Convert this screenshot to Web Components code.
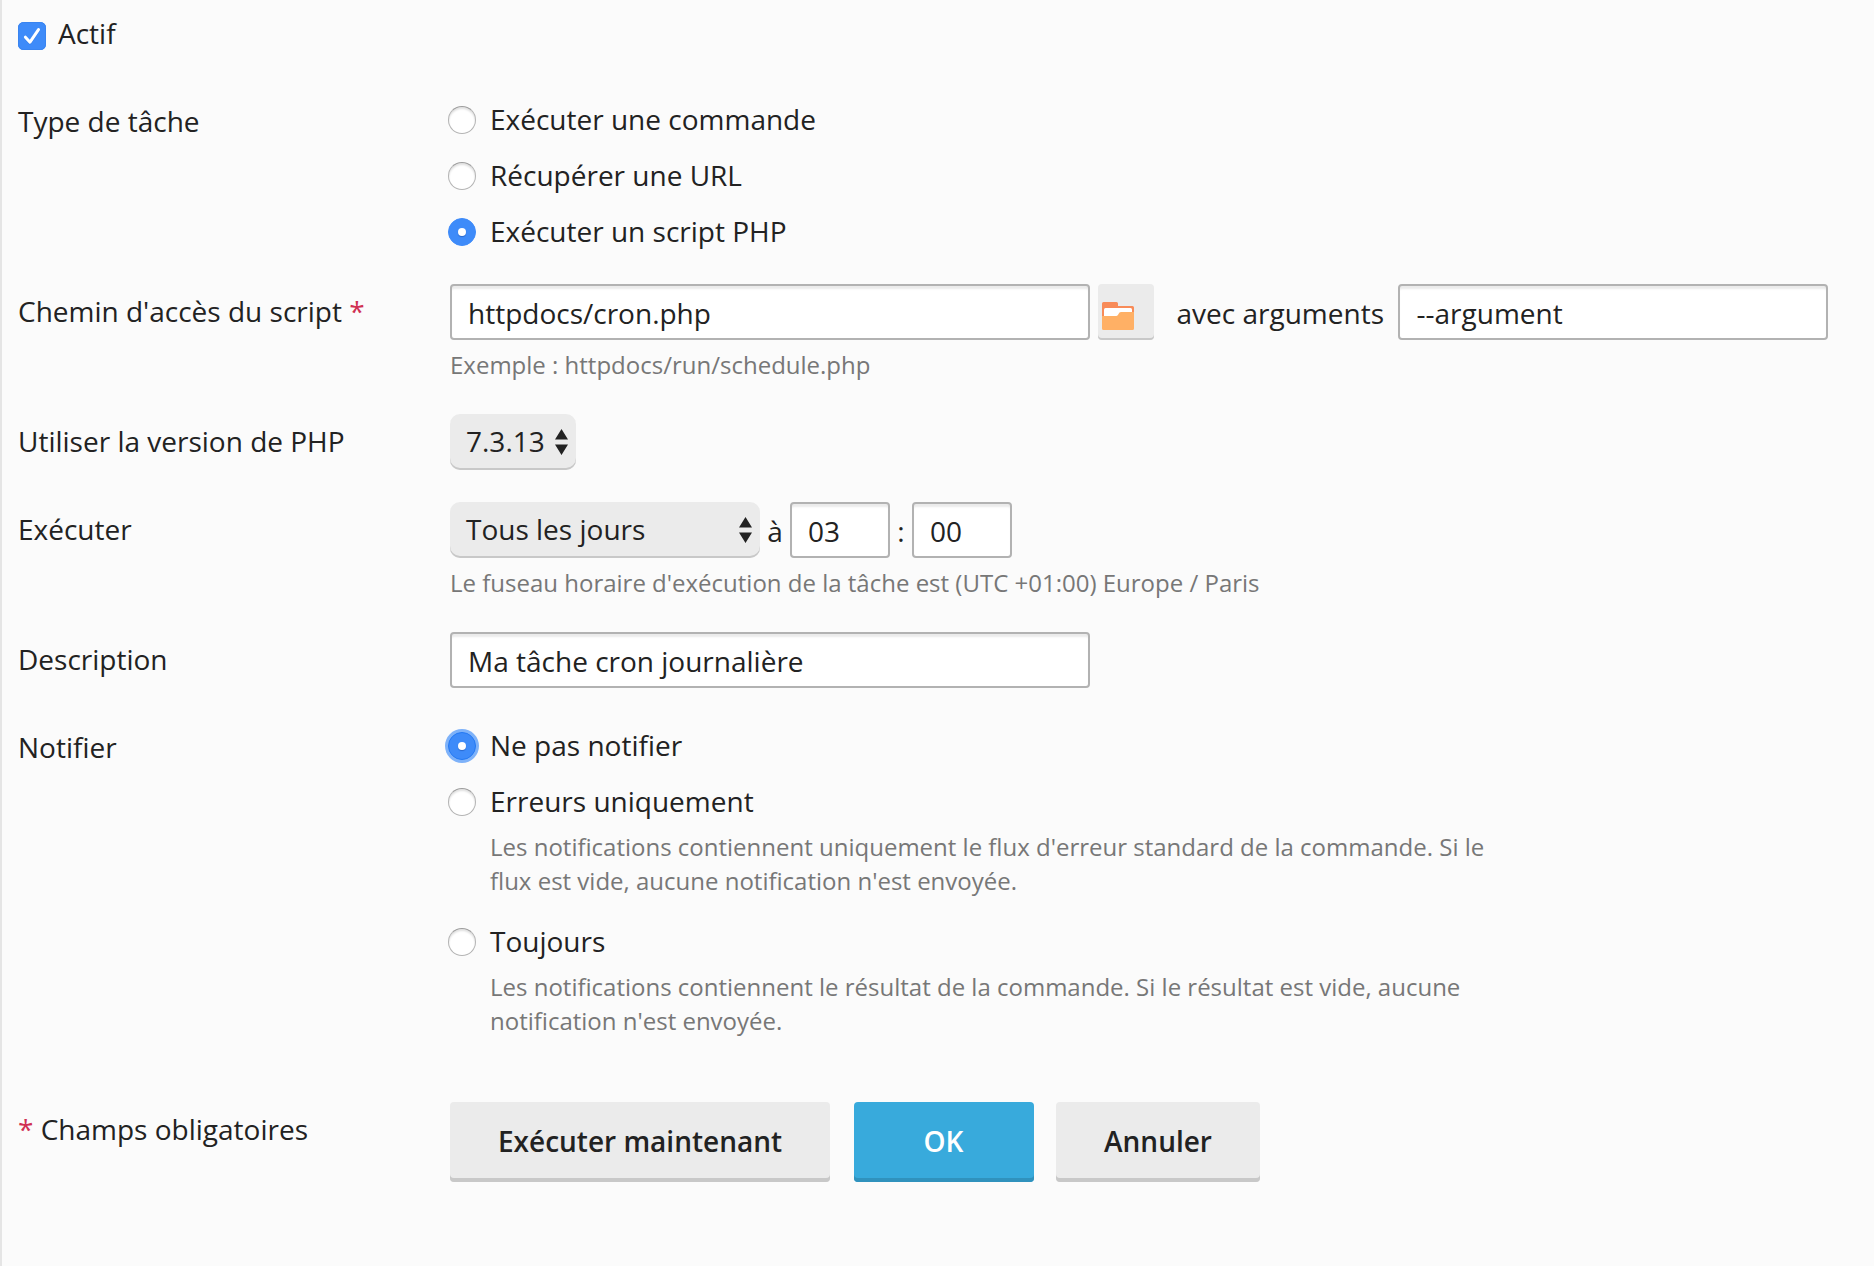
<!DOCTYPE html>
<html lang="fr">
<head>
<meta charset="utf-8">
<title>Tâche planifiée</title>
<style>
    body {
        margin: 0;
        background: #fbfbfb;
        color: #222;
        font-family: 'Open Sans', sans-serif;
        font-size: 28px;
        line-height: 40px;
    }
</style>
</head>
<body>

<task-form></task-form>

<script>
class CheckBox extends HTMLElement {

    constructor() {
        super();
        this.shadow = this.attachShadow({ mode: 'open' });
    }

    connectedCallback() {
        this.render();
    }

    render() {

        this.shadow.innerHTML =
        `
        <style>
            :host {
                display: flex;
                align-items: flex-start;
                gap: 12px;
            }
            svg {
                display: block;
                flex: none;
                margin-top: 9px;
            }
        </style>
        <svg width="28" height="28" viewBox="0 0 28 28">
            <rect width="28" height="28" rx="5.5" fill="#3e8bf9"/>
            <rect x=".5" y=".5" width="27" height="27" rx="5" fill="none" stroke="#3984f0"/>
            <path d="M7.4 16 12 21 20.5 8.400" fill="none" stroke="#1f66cf" stroke-opacity=".4" stroke-width="3" stroke-linecap="round" stroke-linejoin="round"/>
            <path d="M7.4 15.200 12 20.200 20.5 7.600" fill="none" stroke="#fff" stroke-width="3" stroke-linecap="round" stroke-linejoin="round"/>
        </svg>
        <span><slot></slot></span>`;
    }
}

customElements.define('check-box', CheckBox);

class RadioOption extends HTMLElement {

    constructor() {
        super();
        this.shadow = this.attachShadow({ mode: 'open' });
    }

    connectedCallback() {
        this.render();
    }

    render() {

        this.shadow.innerHTML =
        `
        <style>
            :host {
                display: grid;
                grid-template-columns: 28px 1fr;
                column-gap: 14px;
                margin-left: -2px;
            }
            .dot {
                box-sizing: border-box;
                display: flex;
                align-items: center;
                justify-content: center;
                width: 28px;
                height: 28px;
                margin-top: 7px;
                border: 1px solid #b4b4b4;
                border-top-color: #9c9c9c;
                border-radius: 50%;
                background: #fff;
                box-shadow: inset 0 2px 2px rgba(0, 0, 0, 0.12);
            }
            :host([checked]) .dot {
                border-color: #3e8bf9;
                background: #3e8bf9;
                box-shadow: none;
            }
            :host([checked]) .dot::after {
                content: '';
                width: 8px;
                height: 8px;
                border-radius: 50%;
                background: #fff;
                box-shadow: 0 1px 1px rgba(0, 40, 120, 0.35);
            }
            :host([checked][focused]) .dot {
                border-color: #2479f3;
                box-shadow: 0 0 0 3px #7eb2f9;
            }
            ::slotted([slot="hint"]) {
                display: block;
                grid-column: 2;
                margin: 9px 0 7px;
            }
        </style>
        <span class="dot"></span>
        <span><slot></slot></span>
        <slot name="hint"></slot>`;
    }
}

customElements.define('radio-option', RadioOption);

class HintText extends HTMLElement {

    constructor() {
        super();
        this.shadow = this.attachShadow({ mode: 'open' });
    }

    connectedCallback() {
        this.render();
    }

    render() {

        this.shadow.innerHTML =
        `
        <style>
            :host {
                display: block;
                color: #777;
                font-size: 24px;
                line-height: 34px;
            }
        </style>
        <slot></slot>`;
    }
}

customElements.define('hint-text', HintText);

class TextField extends HTMLElement {

    constructor() {
        super();
        this.shadow = this.attachShadow({ mode: 'open' });
    }

    connectedCallback() {
        this.render();
    }

    render() {

        this.shadow.innerHTML =
        `
        <style>
            :host {
                display: block;
                box-sizing: border-box;
                flex: none;
                width: var(--field-width, 640px);
                height: 56px;
                padding: 7px 16px 0;
                border: 2px solid #b2b2b2;
                border-radius: 4px;
                background: #fff;
                box-shadow: inset 0 4px 2px -1px #ebebeb;
                white-space: nowrap;
            }
        </style>
        <slot></slot>`;
    }
}

customElements.define('text-field', TextField);

class SelectField extends HTMLElement {

    constructor() {
        super();
        this.shadow = this.attachShadow({ mode: 'open' });
    }

    connectedCallback() {
        this.render();
    }

    render() {

        this.shadow.innerHTML =
        `
        <style>
            :host {
                display: flex;
                box-sizing: border-box;
                justify-content: space-between;
                align-items: flex-start;
                flex: none;
                width: var(--field-width, 126px);
                height: 56px;
                padding: 7px 8px 0 16px;
                border-radius: 10px;
                background: #ebebeb;
                box-shadow: inset 0 -2px 0 #c8c8c8;
                white-space: nowrap;
            }
            svg {
                display: block;
                margin-top: 8px;
            }
        </style>
        <span><slot></slot></span>
        <svg width="13" height="26" viewBox="0 0 13 26" fill="#222">
            <path d="M6.5 0 13 10.5H0zM6.5 26 13 15.5H0z"/>
        </svg>`;
    }
}

customElements.define('select-field', SelectField);

class BrowseButton extends HTMLElement {

    constructor() {
        super();
        this.shadow = this.attachShadow({ mode: 'open' });
    }

    connectedCallback() {
        this.render();
    }

    render() {

        this.shadow.innerHTML =
        `
        <style>
            :host {
                display: block;
                box-sizing: border-box;
                flex: none;
                width: 56px;
                height: 56px;
                padding: 18px 4px 0;
                border-radius: 4px;
                background: #ebebeb;
                box-shadow: inset 0 -2px 0 #c8c8c8;
            }
            svg {
                display: block;
            }
        </style>
        <svg width="32" height="28" viewBox="0 0 32 28">
            <path d="M0 26V1.5Q0 0 1.500 0H14.500Q16 0 16 1.500V4H30.500Q32 4 32 5.500V26z" fill="#f88b58"/>
            <path d="M2 14V7.500Q2 6 3.500 6H28.500Q30 6 30 7.500V14z" fill="#fff"/>
            <path d="M0 14H14.500Q16 13.700 16.500 12 17.200 10 19 10H32V26.500Q32 28 30.500 28H1.500Q0 28 0 26.500z" fill="#ffb065"/>
        </svg>`;
    }
}

customElements.define('browse-button', BrowseButton);

class FormButton extends HTMLElement {

    constructor() {
        super();
        this.shadow = this.attachShadow({ mode: 'open' });
    }

    connectedCallback() {
        this.render();
    }

    render() {

        this.shadow.innerHTML =
        `
        <style>
            :host {
                display: block;
                box-sizing: border-box;
                flex: none;
                width: var(--button-width);
                height: 80px;
                padding-top: 19px;
                border-radius: 4px;
                background: #ebebeb;
                box-shadow: inset 0 -4px 0 #c8c8c8;
                font-weight: 600;
                text-align: center;
                white-space: nowrap;
            }
            :host([primary]) {
                padding-right: 1px;
                background: #38aadc;
                box-shadow: inset 0 -4px 0 #3092bd;
                color: #fff;
            }
        </style>
        <slot></slot>`;
    }
}

customElements.define('form-button', FormButton);

class FormRow extends HTMLElement {

    constructor() {
        super();
        this.shadow = this.attachShadow({ mode: 'open' });
    }

    connectedCallback() {
        this.render();
    }

    render() {

        this.shadow.innerHTML =
        `
        <style>
            :host {
                display: grid;
                grid-template-columns: 432px 1fr;
                margin-bottom: 32px;
            }
            .label {
                padding-top: 7px;
            }
            ::slotted([slot="label"]) {
                display: block;
            }
        </style>
        <div class="label"><slot name="label"></slot></div>
        <div><slot></slot></div>`;
    }
}

customElements.define('form-row', FormRow);

class TaskForm extends HTMLElement {

    constructor() {
        super();
        this.shadow = this.attachShadow({ mode: 'open' });
    }

    connectedCallback() {
        this.render();
    }

    render() {

        this.shadow.innerHTML =
        `
        <style>
            :host {
                display: block;
                box-sizing: border-box;
                min-height: 1266px;
                padding: 13px 0 0 16px;
                border-left: 2px solid #e5e5e5;
            }
            check-box {
                margin-bottom: 41px;
            }
            .options {
                display: grid;
                gap: 16px;
                width: 1060px;
                padding: 5px 0 1px;
            }
            .line {
                display: flex;
                align-items: flex-start;
            }
            .line > span {
                padding-top: 9px;
            }
            .line + hint-text {
                margin-top: 8px;
            }
            .required {
                color: #d02f52;
            }
            .path browse-button {
                margin-left: 8px;
            }
            .path span {
                margin: 0 14.5px 0 22.5px;
            }
            .path text-field + browse-button ~ text-field {
                --field-width: 430px;
            }
            .time select-field {
                --field-width: 310px;
            }
            .time text-field {
                --field-width: 100px;
            }
            .time span {
                width: 30px;
                text-align: center;
            }
            .time text-field + span {
                width: 22px;
            }
            .actions {
                margin-top: 56px;
            }
        </style>
        <check-box>Actif</check-box>

        <form-row>
            <span slot="label">Type de tâche</span>
            <div class="options">
                <radio-option>Exécuter une commande</radio-option>
                <radio-option>Récupérer une URL</radio-option>
                <radio-option checked>Exécuter un script PHP</radio-option>
            </div>
        </form-row>

        <form-row>
            <span slot="label">Chemin d'accès du script <span class="required">*</span></span>
            <div class="line path">
                <text-field>httpdocs/cron.php</text-field>
                <browse-button></browse-button>
                <span>avec arguments</span>
                <text-field>--argument</text-field>
            </div>
            <hint-text>Exemple : httpdocs/run/schedule.php</hint-text>
        </form-row>

        <form-row>
            <span slot="label">Utiliser la version de PHP</span>
            <select-field>7.3.13</select-field>
        </form-row>

        <form-row>
            <span slot="label">Exécuter</span>
            <div class="line time">
                <select-field>Tous les jours</select-field>
                <span>à</span>
                <text-field>03</text-field>
                <span>:</span>
                <text-field>00</text-field>
            </div>
            <hint-text>Le fuseau horaire d'exécution de la tâche est (UTC +01:00) Europe / Paris</hint-text>
        </form-row>

        <form-row>
            <span slot="label">Description</span>
            <text-field>Ma tâche cron journalière</text-field>
        </form-row>

        <form-row>
            <span slot="label">Notifier</span>
            <div class="options">
                <radio-option checked focused>Ne pas notifier</radio-option>
                <radio-option>Erreurs uniquement
                    <hint-text slot="hint">Les notifications contiennent uniquement le flux d'erreur standard de la commande. Si le flux est vide, aucune notification n'est envoyée.</hint-text>
                </radio-option>
                <radio-option>Toujours
                    <hint-text slot="hint">Les notifications contiennent le résultat de la commande. Si le résultat est vide, aucune notification n'est envoyée.</hint-text>
                </radio-option>
            </div>
        </form-row>

        <form-row class="actions">
            <span slot="label"><span class="required">*</span> Champs obligatoires</span>
            <div class="line">
                <form-button style="--button-width: 380px">Exécuter maintenant</form-button>
                <form-button primary style="--button-width: 180px; margin-left: 24px">OK</form-button>
                <form-button style="--button-width: 204px; margin-left: 22px">Annuler</form-button>
            </div>
        </form-row>`;
    }
}

customElements.define('task-form', TaskForm);
</script>
</body>
</html>
